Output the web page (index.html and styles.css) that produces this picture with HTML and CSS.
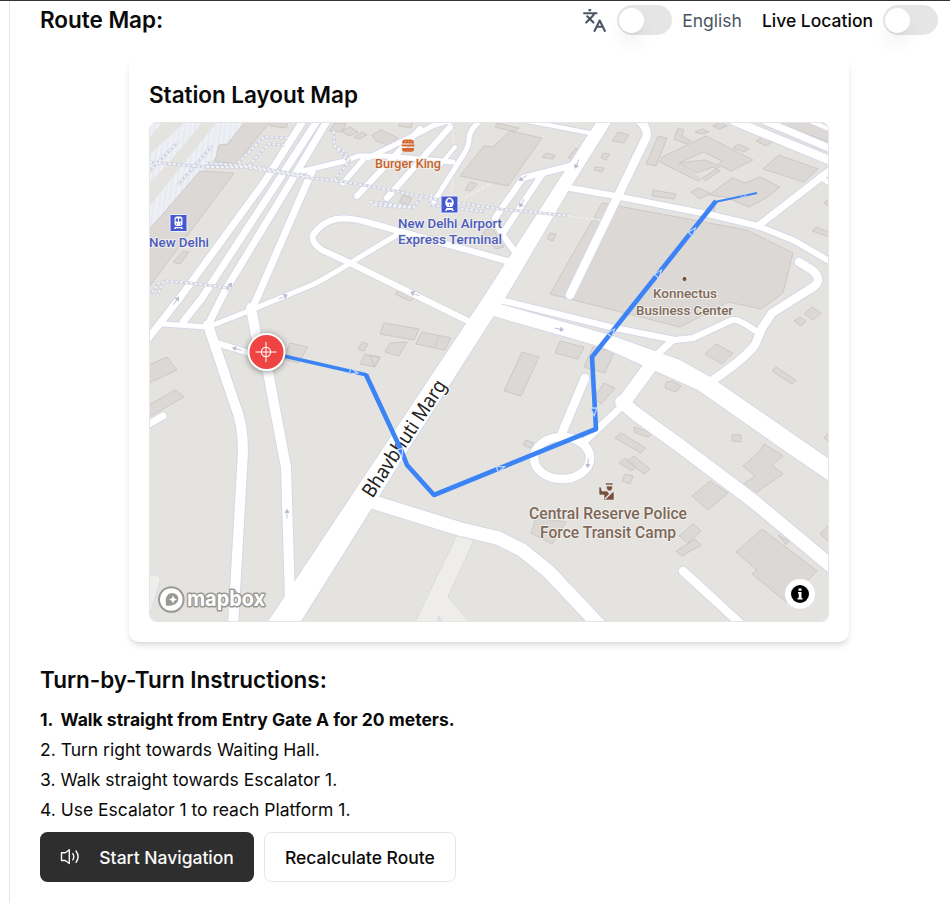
FILE: index.html
```html
<!DOCTYPE html>
<html lang="en">
<head>
<meta charset="utf-8">
<title>Route Map</title>
<link rel="stylesheet" href="styles.css">
</head>
<body>
<main class="page">
  <header class="topbar">
    <h2 class="heading">Route Map:</h2>
    <div class="controls">
      <svg class="lang-icon" viewBox="0 0 24 24"><path d="m5 8 6 6M4 14l6-6 2-3M2 5h12M7 2h1M22 22l-5-10-5 10M14 18h6"/></svg>
      <span class="switch"><span class="thumb"></span></span>
      <span class="lang">English</span>
      <span class="live">Live Location</span>
      <span class="switch"><span class="thumb"></span></span>
    </div>
  </header>

  <section class="card">
    <h3 class="heading card-title">Station Layout Map</h3>
    <div class="map">
      <svg class="map-svg" viewBox="149 122 680 500">
        <defs>
          <pattern id="hatch" width="5" height="5" patternUnits="userSpaceOnUse" patternTransform="rotate(8)">
            <rect width="5" height="5" fill="#eef0f6"/><rect width="2" height="5" fill="#e8eaf3"/>
          </pattern>
          <g id="roads">
            <g class="w4"><path d="M527 121L590 133M810 121L829 129M455 147L440 165"/></g>
            <g class="w5">
              <path d="M163 324L208 327M208 327L251 310L312 285C345 268 355 259 397 235"/>
              <path d="M363 160L343 183M368 158L427 129Q438 122 453 121"/>
              <path d="M480 121Q468 131 469 141Q468 148 462 157L433 203"/>
              <path d="M820 177L829 183M453 162L385 156L358 156L345 161L303 171"/>
            </g>
            <g class="w6">
              <path d="M213 342L260 356M507 261L370 223Q350 217 336 219Q322 222 313 235Q311 243 322 250L350 263L468 321"/>
              <path d="M543 173L503 233M570 188L610 195L712 215L758 226L795 241L829 261"/>
              <path d="M500 300L610 327L675 340L693 338L732 320Q738 318 757 332"/>
              <path d="M387 198L450 127M357 196L420 129M578 164L523 178L495 218Q494 224 518 256"/>
            </g>
            <g class="w7">
              <path d="M303 121L265 181L182 295L147 340M317 121L284 172L202 298L183 322M327 121L280 200L226 289L208 325M312 171L257 298L251 310"/>
              <path d="M149 424L163 416M758 226L829 171M672 341L652 359M620 408L585 441M765 121L829 148"/>
            </g>
            <g class="w8">
              <path d="M640 121Q649 130 646 138L570 295M734 121L829 160M683 571L743 626"/>
              <path d="M799 262L812 270Q825 281 810 289L772 313L762 328L755 345Q744 359 713 380"/>
              <path d="M585 378L562 433"/><ellipse cx="562" cy="458" rx="28" ry="21"/>
            </g>
            <g class="w10">
              <path d="M208 325L235 405Q243 423 243 452L233 626M251 308L256 335L268 372L278 425L286 467L290 600"/>
            </g>
            <g class="w13"><path d="M373 502L460 529L498 538L522 550L548 571L600 626M652 364L624 402M622 402L636 414L679 445L752 500L835 569"/></g>
            <path class="area" d="M597 121L483 298L382 450L265 626H298L370 511L397 467L493 317L513 285L570 188L612 121z"/>
            <path class="area" d="M500 304L610 335L655 351L680 360L712 378L832 461V483L785 451L698 390L640 364L602 347L490 315z"/>
          </g>
          <path id="ped" d="M149 162L205 167L245 167L310 178L340 181L385 189L439 200L500 209L570 216M205 163L250 166L310 177M149 172L178 142M178 185L212 146M238 163L264 137L288 138M249 166L268 144L285 145M334 131V145L349 162L334 180M334 145L344 151L350 161M157 297L164 281L190 283L230 288M149 296L160 282M370 202L414 207L422 196M374 205L412 208M432 194L429 205L487 212"/>
          <g id="way"><path d="M-4.500 0H4.500M1.500-2L4.500 0L1.500 2z"/></g>
          <g id="dir"><path d="M-4-3L4 0L-4 3z"/></g>
        </defs>
        <rect class="land" x="149" y="122" width="680" height="500"/>
        <path fill="url(#hatch)" d="M149 122H163L149 138zM185 122H203L170 161L149 184V155zM217 122H245L196 180L149 228V207z"/>
        <path class="foot" d="M457 535L474 540L448 597L470 622H443L439 616L437 622H415zM149 575L157 575Q161 577 160 582L149 617z"/>
        <g class="building">
          <path d="M245 122H270L236 164L215 161L219 145L228 144zM200 171L234 173L149 287V230zM270 122H288L286 128L270 126zM183 251L189 252L180 264L173 262z"/>
          <path d="M335 123H346L342 132L329 131zM341 131L350 127L358 132L349 136zM354 137L362 132L367 135L359 139zM372 135L381 130L398 138L388 145L376 141zM400 122H413L411 128L399 126z"/>
          <path d="M510 131L542 138L508 186L460 176L484 146L493 147zM497 123L519 128L515 132L495 127zM470 182L477 184L471 191L465 190zM403 195L412 198L408 205L399 202zM546 153L555 155L553 159L542 157zM576 148L579 150L575 159L568 158zM603 153L610 154L606 160L601 158zM595 167L604 168L602 172L594 170zM550 233L556 234L553 241L547 239z"/>
          <path d="M485 230L493 229L504 247L496 249L482 235z"/>
          <path d="M602 203L747 230L793 253L783 293L761 309L728 302L680 327L550 294z"/>
          <path d="M658 136L667 138L656 166L646 164zM618 132L629 135L624 143L612 141zM678 128L684 130L682 136L691 141L687 144L674 139zM695 132L703 129L709 132L701 134zM713 126L721 122L727 126L719 129zM733 148L738 144L749 149L744 152zM756 141L763 137L772 142L766 146zM653 190L676 194L674 199L652 196z"/>
          <path fill-rule="evenodd" d="M662 157L706 136L753 160L731 171L721 166L698 181L660 162zM679 163L696 173L713 167L720 171L705 181M679 163L704 152L722 161L718 165L705 160z"/>
          <path d="M709 195L732 178L745 183L760 177L780 187L766 198L749 207L725 197zM763 169L779 155L818 169L804 182zM691 192L698 188L710 193L700 199zM707 208L715 207L713 215L706 213zM775 122H829V142zM812 231L816 227L829 232V237zM824 203L829 199V206z"/>
          <path d="M149 365L167 357L177 370L149 383zM149 405L175 390L184 397L149 417zM290 343L308 347L298 363L283 359zM358 349L362 342L368 344L364 351zM360 364L365 354L380 358L375 367zM384 323L419 329L414 340L380 334zM390 343L407 342L399 356L385 352zM422 332L451 338L445 350L416 344zM439 336L435 347M370 355L380 357L374 367z"/>
          <path d="M522 352L539 357L521 396L504 391zM560 341L584 347L578 359L555 353zM593 347L614 352L605 373L584 367zM604 383L615 388L601 404L594 398zM526 440L534 443L531 448L523 445zM398 291L416 297L410 301L395 294z"/>
          <path d="M705 354L716 344L733 353L722 364zM666 382L672 381L681 386L676 392L665 388zM794 321L800 317L806 321L801 326zM804 314L812 307L821 313L813 320zM772 371L776 367L796 380L792 384zM732 435H741V442L732 441zM824 438L829 433V442z"/>
          <path d="M764 444L783 456L772 465L783 474L754 494L742 485L755 476L743 466L758 453zM692 496L710 481L728 493L708 510zM736 552L762 529L817 571L786 602L752 574L757 570zM778 535L789 541L786 545zM820 534L829 525V542z"/>
          <path d="M615 438L621 433L646 448L641 453zM634 427L652 433L649 437L635 433zM619 463L625 458L636 467L632 471zM627 461L634 456L650 469L644 474zM625 474L633 476L630 484L622 481zM679 536L693 524L701 531L688 543zM676 551L695 539L701 545L682 556zM536 518L566 522L552 544L531 533z"/>
        </g>
        <path class="faint" d="M453 122V180L450 200M490 184L463 199M460 204L610 221"/>
        <use href="#roads" class="casing"/>
        <use href="#roads" class="surface"/>
        <use href="#ped" class="ped-edge"/><use href="#ped" class="ped-dash"/>
        <g class="way">
          <use href="#way" transform="translate(283 297) rotate(-25)"/><use href="#way" transform="translate(176 301) rotate(-55)"/>
          <use href="#way" transform="translate(229 287) rotate(-60)"/><use href="#way" transform="translate(237 349) rotate(195)"/>
          <use href="#way" transform="translate(287 514) rotate(-90)"/><use href="#way" transform="translate(415 294) rotate(205)"/>
          <use href="#way" transform="translate(559 329) rotate(12)"/><use href="#way" transform="translate(588 463) rotate(96)"/>
          <use href="#way" transform="translate(577 164) rotate(115)"/><use href="#way" transform="translate(523 178) rotate(145)"/><use href="#way" transform="translate(522 203) rotate(120)"/>
          <use href="#way" transform="translate(235 594) rotate(-90)"/>
        </g>
        <text class="street" textLength="136" lengthAdjust="spacingAndGlyphs" transform="translate(372.500 499) rotate(-56.800)">Bhavbhuti Marg</text>

        <g class="label rail">
          <text x="149" y="246.500" textLength="60" lengthAdjust="spacingAndGlyphs">New Delhi</text>
          <text x="398" y="228" textLength="104" lengthAdjust="spacingAndGlyphs">New Delhi Airport</text>
          <text x="398" y="244" textLength="104" lengthAdjust="spacingAndGlyphs">Express Terminal</text>
        </g>
        <g class="label food"><text x="375" y="167.500" textLength="66" lengthAdjust="spacingAndGlyphs">Burger King</text></g>
        <g class="label place">
          <text x="653" y="298" textLength="64" lengthAdjust="spacingAndGlyphs">Konnectus</text>
          <text x="636" y="315" textLength="97" lengthAdjust="spacingAndGlyphs">Business Center</text>
          <g class="large">
            <text x="529" y="519" textLength="158" lengthAdjust="spacingAndGlyphs">Central Reserve Police</text>
            <text x="540" y="538" textLength="136" lengthAdjust="spacingAndGlyphs">Force Transit Camp</text>
          </g>
        </g>
        <circle class="place-dot" cx="684.500" cy="279" r="2.600"/>
        <g transform="translate(170 214.500)"><rect class="rail-box" width="17" height="17" rx="1"/><path fill="#fff" fill-rule="evenodd" d="M6 2h5l1.500 1.500V10L11 11.500H6L4.500 10V3.500zM5.700 4v3H8V4zM9 4v3h2.300V4zM6 9h1v1H6zM10 9h1v1h-1zM5 12.500h7l1 2h-1.500l-.5-.7H6l-.5.7H4z"/></g>
        <g transform="translate(441 196)"><rect class="rail-box" width="17" height="17" rx="1"/><path fill="#fff" fill-rule="evenodd" d="M8.500 1.500Q13 2 12.700 8L11 11H6L4.300 8Q4 2 8.500 1.500zM7 3.300L6 6.500h5L10 3.300zM8 8v1.500h1V8zM5.500 12h6l1.500 3h-1.500l-.7-1H6.200l-.7 1H4z"/></g>
        <g fill="#d3692f"><path d="M402 143.500Q402 139.500 405 139.500H411Q414 139.500 414 143.500zM401.500 144.500h13v1.500l-1.500.5h-10l-1.500-.5zM402 148h12v1.500Q414 151.700 411 151.700H405Q402 151.700 402 149.500z"/><path fill="#f0b18e" d="M405 141h1v1h-1zM408 141h1v1h-1zM411 141h1v1h-1z"/></g>
        <path class="officer" d="M605.500 483H613V485H605.500zM606.500 486H612.500V488Q612 491 609.500 491Q607 491 606.500 488zM599 487H601L602 491H607L609.500 494L611 491.500L614 492V500H604V495H600Q599 495 599 493z"/>
        <path d="M605 499L613 491" stroke="#eee" stroke-width="1.300"/>

        <path class="route thin" d="M266 352L367 375"/>
        <path class="route" d="M366 374.800L402 452L407 465L434 495L596 429L592 357L716 201"/>
        <path class="route tip" d="M715 202L757 193"/>
        <g class="dir">
          <use href="#dir" transform="translate(354 372) rotate(13)"/><use href="#dir" transform="translate(401 453) rotate(75)"/>
          <use href="#dir" transform="translate(501 468) rotate(-22)"/><use href="#dir" transform="translate(594 412) rotate(88)"/>
          <use href="#dir" transform="translate(612 332) rotate(-51)"/><use href="#dir" transform="translate(659 273) rotate(-51)"/>
          <use href="#dir" transform="translate(693 231) rotate(-51)"/><use href="#dir" transform="translate(744 195.500) rotate(-12) scale(.6)"/>
        </g>

        <g class="marker"><circle cx="266.500" cy="352" r="18"/><path d="M266 342V362M255.500 352H276.500"/><circle class="ring" cx="266" cy="352" r="4.600"/></g>

        <g class="logo"><circle class="logo-disc" cx="171.300" cy="599.500" r="12.300"/>
          <path class="logo-pin" fill-rule="evenodd" d="M166 605.500Q164.500 596 169.500 593.500Q174 592 177 595Q180 599 176.500 603Q173 606.500 166 605.500zM173 595.500L171.700 598.200L169 599.500L171.700 600.800L173 603.500L174.300 600.800L177 599.500L174.300 598.200z"/>
          <text x="187" y="606" textLength="78" lengthAdjust="spacingAndGlyphs">mapbox</text></g>
        <circle cx="800" cy="594" r="15" fill="#fff"/><circle cx="800" cy="594" r="9" fill="#000"/>
        <path fill="#fff" d="M798 592H801.500V598H802.500V599.500H797.500V598H798.700V593.500H798zM798.500 588.500H801.500V590.800H798.500z"/>
      </svg>
    </div>
  </section>

  <section class="directions">
    <h2 class="heading">Turn-by-Turn Instructions:</h2>
    <ol class="steps">
      <li class="current"><span class="num">1.</span>Walk straight from Entry Gate A for 20 meters.</li>
      <li>2. Turn right towards Waiting Hall.</li>
      <li>3. Walk straight towards Escalator 1.</li>
      <li>4. Use Escalator 1 to reach Platform 1.</li>
    </ol>
    <div class="actions">
      <button class="btn primary"><svg class="speaker" viewBox="0 0 20 20"><path d="M9.300 2.800V16.500L5.300 13.500H1.500V5.800H5.300zM12.800 6.500Q14.700 9.700 12.800 12.800M16 4Q20.200 9.700 16 15.300"/></svg>Start Navigation</button>
      <button class="btn">Recalculate Route</button>
    </div>
  </section>
</main>
</body>
</html>
```
FILE: styles.css
```css
* { box-sizing: border-box; margin: 0; padding: 0; }
body {
  background: #fff;
  color: #0a0a0a;
  font-family: Inter, "Liberation Sans", sans-serif;
  font-size: 17.5px;
  line-height: 25px;
}
.page {
  height: 903px;
  margin-left: 9px;
  padding: 2px 12px 0 30px;
  border-left: 1px solid #e5e5e5;
  overflow: hidden;
}
body::before {
  content: "";
  position: absolute;
  inset: 0 0 auto;
  height: 1px;
  background: #333;
}
.heading { font-size: 22.5px; line-height: 35px; font-weight: 600; letter-spacing: -.03px; }
.topbar { display: flex; justify-content: space-between; height: 36px; }
.topbar .heading { margin-top: -2px; }
.topbar, .controls { align-items: center; }
.controls { display: flex; }
.lang-icon {
  width: 25px; height: 25px; margin-right: 10px;
  fill: none; stroke: #4b5563; stroke-width: 2; stroke-linecap: round; stroke-linejoin: round;
}
.switch { width: 55px; height: 30px; padding: 2.500px 2px; border-radius: 15px; background: #e5e5e5; }
.thumb {
  display: block; width: 25px; height: 25px; border-radius: 50%; background: #fff;
  box-shadow: 0 12.500px 19px -4px rgb(0 0 0 / .1), 0 5px 7.500px -5px rgb(0 0 0 / .1);
}
.lang { margin: 0 20px 0 10px; color: #4b5563; }
.live { margin-right: 10px; font-weight: 500; }
.card {
  width: 720px; height: 585px; margin: 19px 0 0 89px; padding: 20px;
  border-radius: 10px; background: #fff;
  box-shadow: 0 5px 7.500px -1px rgb(0 0 0 / .1), 0 2.500px 5px -2.500px rgb(0 0 0 / .1);
}
.card-title { margin-bottom: 10px; }
.map { height: 500px; border: 1px solid #e5e5e5; border-radius: 7.500px; overflow: hidden; }
.map-svg { display: block; width: 680px; height: 500px; margin: -1px; }
.directions { margin-top: 20px; }
.directions .heading { margin-bottom: 10px; }
.steps { display: grid; gap: 5px; list-style: none; }
.current { font-weight: 700; }
.num { display: inline-block; width: 20.5px; }
.actions { display: flex; gap: 10px; margin-top: 10px; }
.btn {
  display: flex; align-items: center; height: 50px; padding: 0 20px;
  border: 1px solid #e5e5e5; border-radius: 7.500px; background: #fff;
  color: #0a0a0a; font: 500 17.5px Inter, sans-serif;
}
.primary { border: 0; background: #2e2e2e; color: #fafafa; }
.speaker { width: 20px; height: 20px; margin-right: 19.3px; fill: none; stroke: currentColor; stroke-width: 1.4; stroke-linecap: round; stroke-linejoin: round; }

.land { fill: #e4e3df; }
.foot { fill: #eeede9; stroke: #d8dae8; }
.building { fill: #dcd8d5; stroke: #cac6c3; stroke-width: .9; }
.faint { fill: none; stroke: #efeeea; stroke-width: 1.5; stroke-dasharray: 4 2; }
.casing { --tone: #d5d8e7; --edge: 2px; }
.surface { --tone: #fff; --edge: 0px; }
#roads path, #roads ellipse {
  fill: none; stroke: var(--tone); stroke-width: calc(var(--w) + var(--edge));
  stroke-linecap: round; stroke-linejoin: round;
}
#roads .area { --w: 0px; fill: var(--tone); }
.w4 { --w: 4px; } .w5 { --w: 5px; } .w6 { --w: 6px; } .w7 { --w: 7px; }
.w8 { --w: 8.500px; } .w10 { --w: 10px; } .w13 { --w: 13.500px; }
.ped-edge { fill: none; stroke: #ced2e0; stroke-width: 3; }
.ped-dash { fill: none; stroke: #f3f3f5; stroke-width: 1.8; stroke-dasharray: 3 1.8; }
.way { fill: #b9bed3; stroke: #b9bed3; stroke-width: .9; }
.street { font: 20px "Noto Sans", sans-serif; fill: #222; stroke: #fff; stroke-width: 2; paint-order: stroke; }
.label { font: 500 13.6px Roboto, sans-serif; stroke: #f0efed; stroke-width: 2; paint-order: stroke; stroke-linejoin: round; }
.large { font-size: 16px; }
.rail { fill: #4d5bbd; }
.food { fill: #c9632d; }
.place { fill: #806858; }
.place-dot { fill: #72503d; stroke: #f0efed; }
.rail-box { fill: #4759d0; stroke: #eef0fb; }
.officer { fill: #76513d; stroke: #eeece9; stroke-width: .6; }
.route { fill: none; stroke: #3c83f6; stroke-width: 4.6; stroke-linejoin: round; }
.thin { stroke-width: 3.4; }
.tip { stroke-width: 2; }
.dir { fill: #3c83f6; stroke: #c9dcfa; stroke-width: 1.1; }
.marker { fill: #ef4444; stroke: #fff; stroke-width: 2; filter: drop-shadow(0 1px 3px rgb(0 0 0 / .45)); }
.marker path { stroke-width: 1; }
.marker .ring { fill: none; stroke-width: 1.2; }
.logo { fill: #fff; stroke: #999894; }
.logo-disc { stroke-width: 2; }
.logo-pin { fill: #999894; stroke: none; }
.logo text { font: 700 21px Inter, sans-serif; stroke-width: 3; paint-order: stroke; stroke-linejoin: round; }
```
